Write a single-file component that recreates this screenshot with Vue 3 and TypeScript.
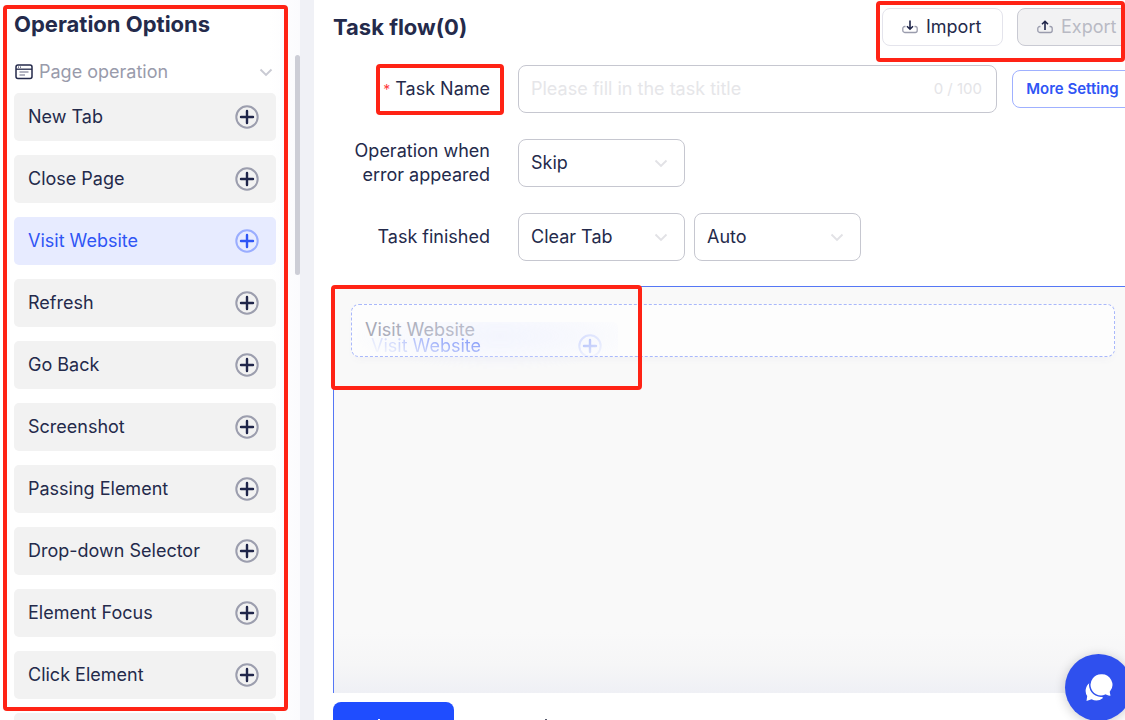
<script setup lang="ts">
import { ref } from 'vue'

const operations: string[] = [
  'New Tab',
  'Close Page',
  'Visit Website',
  'Refresh',
  'Go Back',
  'Screenshot',
  'Passing Element',
  'Drop-down Selector',
  'Element Focus',
  'Click Element',
]
const active = ref('Visit Website')
const title = ref('')
const onError = ref('Skip')
const onFinish = ref('Clear Tab')
const finishMode = ref('Auto')
</script>

<template>
  <div class="page">
    <aside class="sidebar">
      <h2 class="heading">Operation Options</h2>
      <button type="button" class="group">
        <svg class="group-icon" width="18" height="16" viewBox="0 0 18 16" fill="none">
          <rect x="1" y="1" width="16" height="13.5" rx="2" stroke="#242a4b" stroke-width="1.5" />
          <path d="M1 5.2h16" stroke="#242a4b" stroke-width="1.3" />
          <path d="M3 3.1h1M5 3.1h1" stroke="#242a4b" stroke-width="1" />
          <path d="M4.5 8h9M4.5 11h5.5" stroke="#9a9cad" stroke-width="1.3" />
        </svg>
        <span class="group-name">Page operation</span>
        <svg width="14" height="9" viewBox="0 0 14 9" fill="none">
          <path d="M1.5 1.5L7 7l5.5-5.5" stroke="#c9cad3" stroke-width="1.9" />
        </svg>
      </button>
      <div class="ops">
        <button
          v-for="op in operations"
          :key="op"
          type="button"
          class="op"
          :class="{ active: op === active }"
          @click="active = op"
        >
          <span>{{ op }}</span>
          <svg class="plus" width="24" height="24" viewBox="0 0 24 24" fill="none">
            <circle class="ring" cx="12" cy="12" r="10.7" stroke-width="2" />
            <path class="cross" d="M12 6v12M6 12h12" stroke-width="2.4" stroke-linecap="round" />
          </svg>
        </button>
        <button type="button" class="op" aria-label="More operations"></button>
      </div>
      <div class="thumb"></div>
      <div class="mark mark-side"></div>
    </aside>

    <main class="main">
      <div class="content">
        <header class="top">
          <h2 class="heading">Task flow(0)</h2>
          <div class="actions">
            <button type="button" class="action">
              <svg width="16" height="14" viewBox="0 0 16 14" fill="none">
                <path d="M3.5 6.5H2.800A2 2 0 0 0 .8 8.500v2A2 2 0 0 0 2.800 12.500h10.400a2 2 0 0 0 2-2v-2a2 2 0 0 0-2-2h-.7" stroke="#9a9cad" stroke-width="1.3" />
                <path d="M8 .5v8.500M5 6.200l3 3 3-3" stroke="#20264a" stroke-width="1.6" />
              </svg>
              Import
            </button>
            <button type="button" class="action off" disabled>
              <svg width="16" height="14" viewBox="0 0 16 14" fill="none">
                <path d="M3.5 6.5H2.800A2 2 0 0 0 .8 8.500v2A2 2 0 0 0 2.800 12.500h10.400a2 2 0 0 0 2-2v-2a2 2 0 0 0-2-2h-.7" stroke="#9a9cad" stroke-width="1.3" />
                <path d="M8 10V1.500M5 4.300l3-3 3 3" stroke="#20264a" stroke-width="1.6" />
              </svg>
              Export
            </button>
            <div class="mark mark-actions"></div>
          </div>
        </header>

        <form class="form" @submit.prevent>
          <div class="row">
            <label class="label" for="task-name">
              <span class="star">*</span> Task Name
              <span class="mark mark-name"></span>
            </label>
            <div class="field">
              <input id="task-name" v-model="title" type="text" maxlength="100" placeholder="Please fill in the task title" />
              <span class="count">{{ title.length }} / 100</span>
            </div>
            <button type="button" class="more">More Setting</button>
          </div>
          <div class="row">
            <label class="label" for="on-error">Operation when error appeared</label>
            <div class="select">
              <select id="on-error" v-model="onError">
                <option>Skip</option>
              </select>
              <svg width="14" height="9" viewBox="0 0 14 9" fill="none"><path d="M1.5 1.5L7 7l5.5-5.5" stroke="#e2e2e6" stroke-width="1.9" /></svg>
            </div>
          </div>
          <div class="row">
            <label class="label" for="on-finish">Task finished</label>
            <div class="select">
              <select id="on-finish" v-model="onFinish">
                <option>Clear Tab</option>
              </select>
              <svg width="14" height="9" viewBox="0 0 14 9" fill="none"><path d="M1.5 1.5L7 7l5.5-5.5" stroke="#e2e2e6" stroke-width="1.9" /></svg>
            </div>
            <div class="select second">
              <select v-model="finishMode" aria-label="Finish mode">
                <option>Auto</option>
              </select>
              <svg width="14" height="9" viewBox="0 0 14 9" fill="none"><path d="M1.5 1.5L7 7l5.5-5.5" stroke="#e2e2e6" stroke-width="1.9" /></svg>
            </div>
          </div>
        </form>

        <section class="canvas">
          <div class="drop">
            <span class="drop-name">Visit Website</span>
            <div class="ghost">
              <span>Visit Website</span>
              <svg class="plus" width="24" height="24" viewBox="0 0 24 24" fill="none">
                <circle class="ring" cx="12" cy="12" r="10.7" stroke-width="2" />
                <path class="cross" d="M12 6v12M6 12h12" stroke-width="2.4" stroke-linecap="round" />
              </svg>
            </div>
          </div>
          <div class="mark mark-drop"></div>
        </section>
      </div>

      <footer class="footer">
        <button type="button" class="primary" aria-label="Confirm">
          <svg width="16" height="16" viewBox="0 0 16 16"><path d="M8 1v15" stroke="#fff" stroke-width="2" /></svg>
        </button>
        <button type="button" class="plain" aria-label="Cancel">
          <svg width="16" height="16" viewBox="0 0 16 16"><path d="M8 1v15" stroke="#55586c" stroke-width="2" /></svg>
        </button>
      </footer>
    </main>

    <button type="button" class="chat" aria-label="Chat">
      <svg width="28" height="29" viewBox="0 0 28 29">
        <path d="M6.5 9A9.500 9.500 0 0 0 2.200 23L1.500 28l5-1.700A10.500 10.500 0 0 0 18 25Z" fill="#fff" />
        <path d="M16 .5a11.300 11.300 0 1 0 4.500 21.700c1.700 1 3.500 1.500 6 1.600l-1-4.800A11.300 11.300 0 0 0 16 .5Z" fill="#fff" stroke="#2f50ee" stroke-width="1.5" />
      </svg>
    </button>
  </div>
</template>

<style>
body {
  margin: 0;
  overflow: hidden;
}
</style>

<style scoped>
* {
  box-sizing: border-box;
}
.page {
  position: relative;
  display: flex;
  height: 100vh;
  overflow: hidden;
  background: #f0f1f6;
  color: #242a4b;
  font-family: Inter, 'Liberation Sans', sans-serif;
  font-size: 18px;
  line-height: 24px;
}
button,
input,
select {
  font: inherit;
  color: inherit;
}
.heading {
  margin: 0;
  font-size: 22px;
  line-height: 28px;
  font-weight: 700;
  white-space: nowrap;
}
.sidebar {
  position: relative;
  flex: 0 0 300px;
  padding: 10px 24px 0 14px;
  background: linear-gradient(90deg, #fff 270px, #fbfbfd);
}
.group {
  display: flex;
  align-items: center;
  width: 100%;
  margin-top: 22px;
  padding: 0 3px 0 1px;
  border: 0;
  background: none;
  color: #999bab;
}
.group-name {
  flex: 1;
  margin-left: 6px;
  text-align: left;
}
.ops {
  display: flex;
  flex-direction: column;
  gap: 14px;
  margin-top: 9px;
}
.op {
  display: flex;
  flex: none;
  align-items: center;
  justify-content: space-between;
  height: 48px;
  padding: 0 17px 0 14px;
  border: 0;
  border-radius: 5px;
  background: #f2f2f2;
}
.op.active {
  background: #e7ebff;
  color: #2f55f5;
}
.ring {
  stroke: #9c9eae;
}
.cross {
  stroke: #20264a;
}
.active .ring,
.ghost .ring {
  stroke: #9aadff;
}
.active .cross,
.ghost .cross {
  stroke: #2f55f5;
}
.thumb {
  position: absolute;
  top: 55px;
  right: 0;
  width: 5px;
  height: 220px;
  border-radius: 3px;
  background: #cdced6;
}
.mark {
  position: absolute;
  border: 4px solid #ff2315;
  border-radius: 4px;
  pointer-events: none;
  z-index: 2;
}
.mark-side {
  top: 5px;
  left: 3px;
  right: 12px;
  height: 706px;
}
.main {
  display: flex;
  flex: 1;
  flex-direction: column;
  min-width: 0;
  margin-left: 14px;
  overflow: hidden;
  background: #fff;
}
.content {
  display: flex;
  flex: 1;
  flex-direction: column;
  min-height: 0;
  margin-right: -8px;
  padding-left: 19px;
}
.top {
  display: flex;
  justify-content: space-between;
  padding-top: 8px;
}
.top .heading {
  padding-top: 5px;
}
.actions {
  position: relative;
  display: flex;
  gap: 14px;
}
.action {
  display: flex;
  align-items: center;
  gap: 8px;
  width: 121px;
  height: 38px;
  padding: 0 0 0 19px;
  border: 1px solid #e4e4ec;
  border-radius: 8px;
  background: #fff;
  white-space: nowrap;
}
.action.off {
  width: 116px;
  border-color: #c9cad3;
  background: #f2f2f3;
  color: #b9bac4;
}
.mark-actions {
  top: -7px;
  left: -6px;
  right: 8px;
  height: 61px;
}
.form {
  display: flex;
  flex-direction: column;
  gap: 26px;
  margin-top: 19px;
}
.row {
  display: flex;
  align-items: center;
}
.label {
  position: relative;
  flex: 0 0 157px;
  margin-right: 28px;
  text-align: right;
}
.star {
  color: #ff3b3b;
  font-size: 14px;
}
.mark-name {
  top: -13px;
  right: -14px;
  width: 128px;
  height: 51px;
}
.field {
  display: flex;
  flex: 1;
  align-items: center;
  height: 48px;
  padding: 0 14px 0 12px;
  border: 1px solid #c6c7d0;
  border-radius: 8px;
}
.field input {
  flex: 1;
  min-width: 0;
  padding: 0;
  border: 0;
  outline: 0;
  background: none;
}
.field input::placeholder {
  color: #e6e6e9;
  opacity: 1;
}
.count {
  color: #e4e4e7;
  font-size: 15px;
}
.more {
  height: 38px;
  width: 121px;
  margin-left: 15px;
  padding: 0;
  border: 1px solid #9fb0ff;
  border-radius: 8px;
  background: #fff;
  color: #2f55f5;
  font-size: 15px;
  font-weight: 600;
}
.select {
  display: grid;
  align-items: center;
  width: 167px;
}
.select.second {
  margin-left: 9px;
}
.select > * {
  grid-area: 1 / 1;
}
.select select {
  width: 100%;
  height: 48px;
  padding: 0 12px;
  border: 1px solid #c6c7d0;
  border-radius: 8px;
  background: #fff;
  appearance: none;
}
.select svg {
  justify-self: end;
  margin-right: 17px;
  pointer-events: none;
}
.canvas {
  position: relative;
  flex: 1;
  margin-top: 25px;
  padding: 17px;
  border: 1px solid #5577f5;
  border-bottom: 0;
  background: linear-gradient(#f9f9f9 85%, #f6f6f7 93%, #eff0f5);
}
.drop {
  position: relative;
  height: 53px;
  padding: 13px;
  border: 1px dashed #a9b8fb;
  border-radius: 8px;
  background: #fdfdfd;
  box-shadow: 0 5px 8px -4px #f0f0f3;
}
.drop-name {
  color: #a3a5b1;
}
.ghost {
  position: absolute;
  top: 17px;
  left: 5px;
  display: flex;
  align-items: center;
  justify-content: space-between;
  width: 261px;
  height: 48px;
  padding: 0 16px 0 14px;
  border-radius: 5px;
  background: #e7ebffaa;
  color: #2f55f5;
  opacity: 0.65;
  mask-image: radial-gradient(ellipse 150px 34px at 143px 14px, #000 0%, #000a 45%, transparent 100%);
}
.mark-drop {
  top: -2px;
  left: -3px;
  width: 311px;
  height: 105px;
}
.footer {
  display: flex;
  flex: none;
  align-items: flex-start;
  gap: 32px;
  height: 27px;
  padding: 9px 19px 0;
  overflow: hidden;
}
.primary,
.plain {
  display: flex;
  flex: none;
  width: 121px;
  height: 46px;
  padding: 16px 0 0 38px;
  border: 0;
  border-radius: 8px;
  background: #1f4dff;
}
.plain {
  padding-left: 52px;
  background: none;
}
.chat {
  position: absolute;
  right: -7px;
  bottom: -1px;
  display: grid;
  place-items: center;
  width: 67px;
  height: 67px;
  border: 0;
  border-radius: 50%;
  background: #2f50ee;
  box-shadow: 0 2px 12px #0003;
}
</style>
